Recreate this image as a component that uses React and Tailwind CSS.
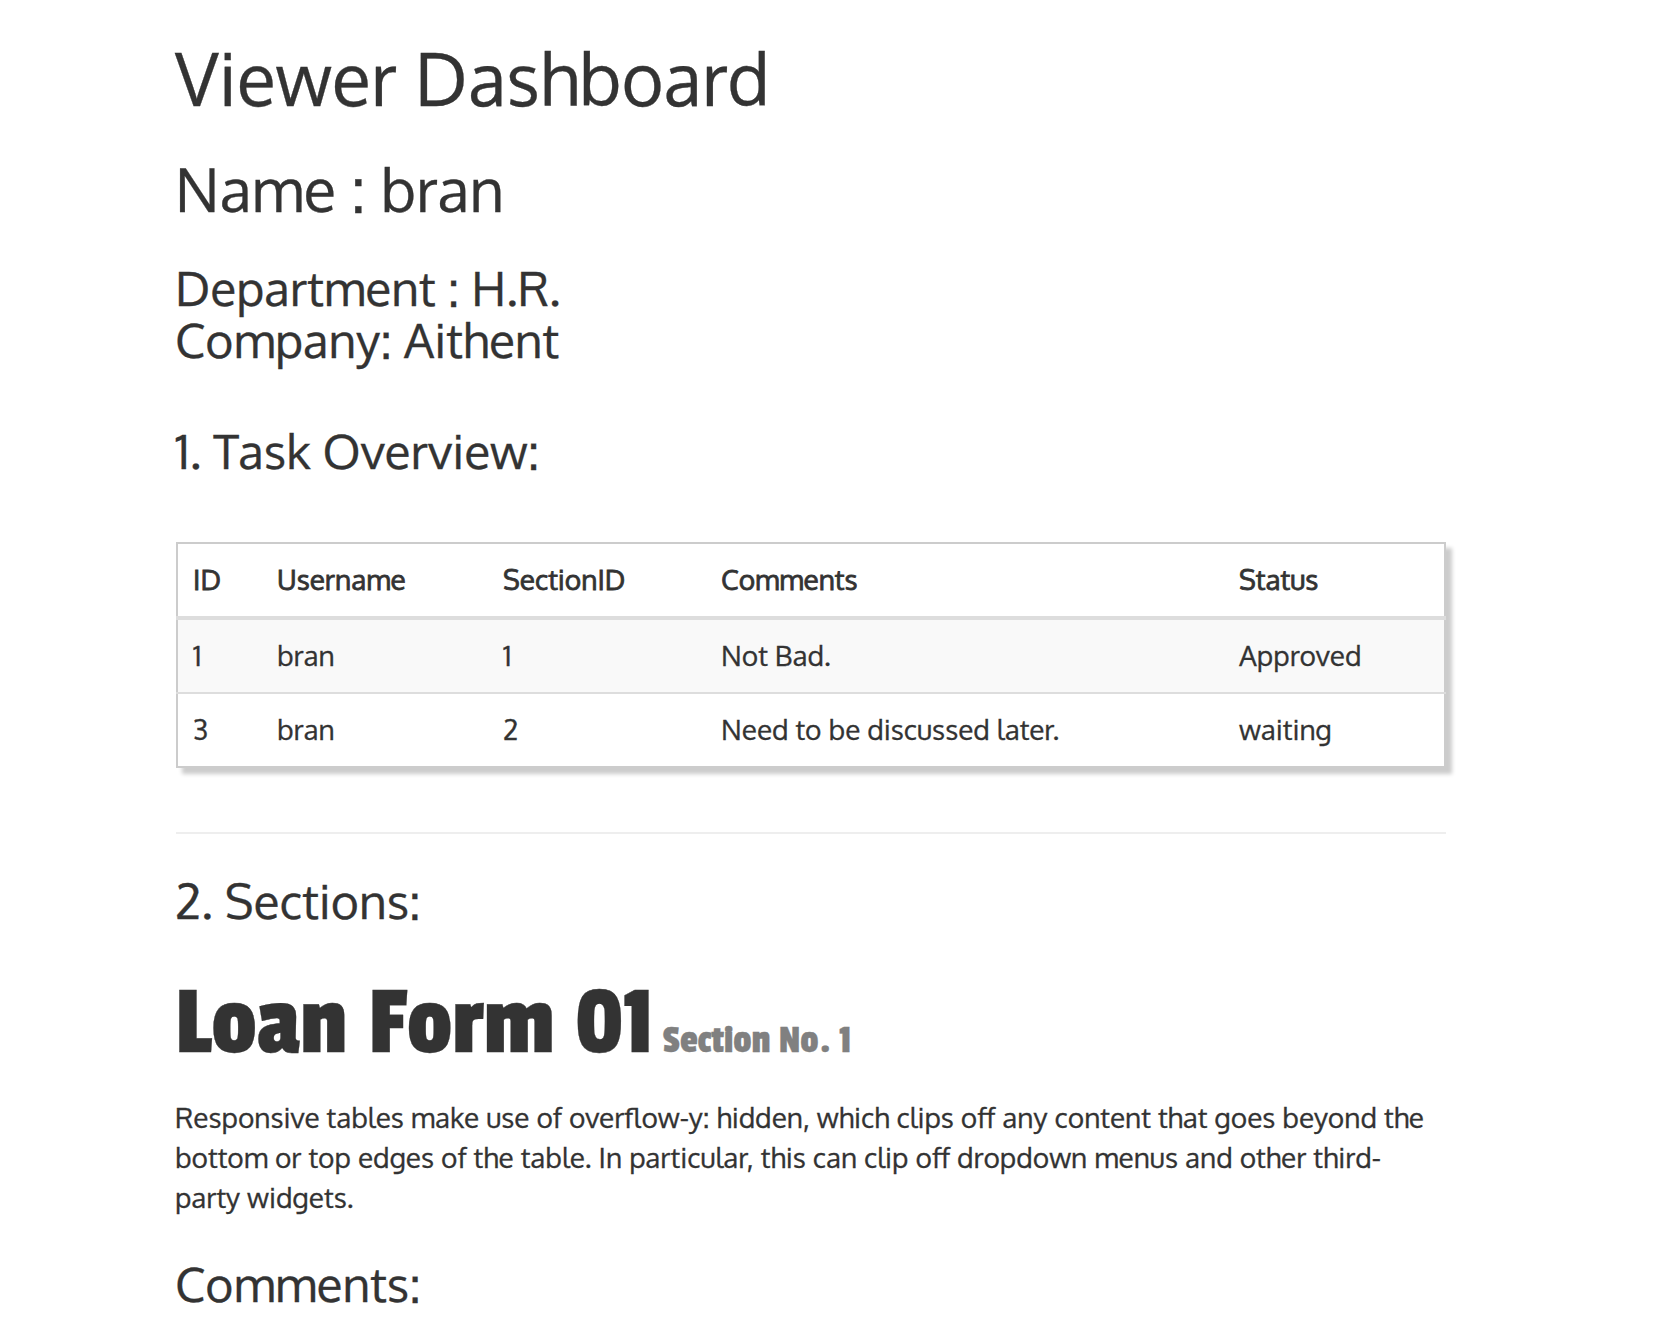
import React from "react";

const columns = ["ID", "Username", "SectionID", "Comments", "Status"];
const tasks = [
  ["1", "bran", "1", "Not Bad.", "Approved"],
  ["3", "bran", "2", "Need to be discussed later.", "waiting"],
];

function Row({ cells, className = "" }) {
  return (
    <div role="row" className={`grid h-[72px] grid-cols-[84px_226px_218px_518px_1fr] items-center pb-0.5 pl-[15px] ${className}`}>
      {cells.map((cell, i) => (
        <span role="cell" key={i} className="leading-10">{cell}</span>
      ))}
    </div>
  );
}

export default function App() {
  return (
    <main className="h-[1324px] overflow-hidden bg-white text-[28px] leading-10 text-[#333] [font-family:Oxygen,'Noto_Sans',sans-serif] [-webkit-text-stroke:0.3px_#333]">
      <div className="ml-[175px] w-[1271px] pt-[38px]">
        <h1 className="text-[72px] leading-[79.2px]">Viewer Dashboard</h1>
        <h2 className="mt-[38px] text-[60px] leading-[66px]">Name : bran</h2>
        <h3 className="mt-10 text-5xl leading-[52px]">
          Department : H.R.
          <br />
          Company: Aithent
        </h3>
        <h3 className="mt-[59px] text-5xl leading-[52.8px]">1. Task Overview:</h3>
        <div role="table" className="mt-16 ml-px border-2 border-[#ccc] shadow-[6px_6px_4px_#ccc] translate-y-px">
          <Row cells={columns} className="[-webkit-text-stroke:0.8px_#333]" />
          <div className="-mx-0.5 h-1 bg-[#ddd]" />
          <Row cells={tasks[0]} className="bg-[#f9f9f9]" />
          <div className="-mx-0.5 h-0.5 bg-[#ddd]" />
          <Row cells={tasks[1]} />
        </div>
        <hr className="mt-[65px] ml-px border-t-2 border-[#eee]" />
        <h3 className="mt-10 text-5xl leading-[52.8px]">2. Sections:</h3>
        <h2 className="mt-[42px] text-[100px] leading-[110px] font-medium [font-family:'Passion_One','Open_Sans',sans-serif]">
          Loan Form 01 <small className="-ml-[13px] text-[40px] leading-none text-[#808080] [-webkit-text-stroke:0.3px_#808080]">Section No. 1</small>
        </h2>
        <p className="mt-[18px] w-[1262px]">
          Responsive tables make use of overflow-y: hidden, which clips off any content that goes beyond the bottom or
          top edges of the table. In particular, this can clip off dropdown menus and other third-party widgets.
        </p>
        <h3 className="mt-10 text-5xl leading-[52.8px]">Comments:</h3>
      </div>
    </main>
  );
}
